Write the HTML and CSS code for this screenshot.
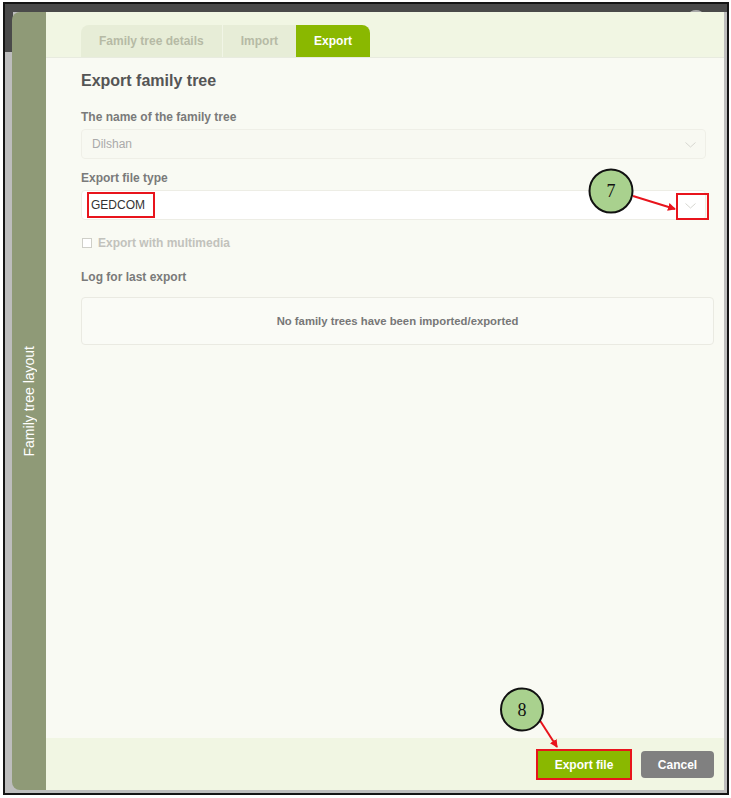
FILE: index.html
```html
<!DOCTYPE html>
<html lang="en">
  <head>
    <meta charset="UTF-8" />
    <title>Export family tree</title>
    <link rel="stylesheet" href="styles.css">
  </head>
  <body>
    <div class="screen">
      <span class="close-hint"></span>
      <div class="panel">
        <div class="sidebar">
          <span class="sidebar-title">Family tree layout</span>
        </div>
        <div class="main">
          <div class="tabs">
            <span class="tab tab-first">Family tree details</span>
            <span class="tab">Import</span>
            <span class="tab tab-active">Export</span>
          </div>
          <div class="content">
            <h2 class="title">Export family tree</h2>

            <label class="field-label">The name of the family tree</label>
            <div class="select select-disabled">
              <span class="select-value">Dilshan</span>
              <svg class="chevron" width="11" height="6" viewBox="0 0 11 6">
                <path d="M0.5 0.5 L5.5 5 L10.5 0.5" fill="none" stroke="#d6d6d0" stroke-width="1" />
              </svg>
            </div>

            <label class="field-label">Export file type</label>
            <div class="select">
              <span class="select-value mark">GEDCOM</span>
              <svg class="chevron" width="11" height="6" viewBox="0 0 11 6">
                <path d="M0.5 0.5 L5.5 5 L10.5 0.5" fill="none" stroke="#d6d6d0" stroke-width="1" />
              </svg>
            </div>

            <div class="check-row">
              <span class="checkbox"></span>
              <span class="check-text">Export with multimedia</span>
            </div>

            <label class="field-label log-label">Log for last export</label>
            <div class="log-box">No family trees have been imported/exported</div>
          </div>
          <div class="footer">
            <button class="btn btn-export">Export file</button>
            <button class="btn btn-cancel">Cancel</button>
          </div>
        </div>
      </div>
    </div>

    <div class="mark-box chevron-mark"></div>

    <svg class="annotations" width="731" height="798" viewBox="0 0 731 798">
      <defs>
        <marker id="arrow" markerWidth="8" markerHeight="8" refX="7" refY="4" orient="auto" markerUnits="userSpaceOnUse">
          <path d="M0 0 L8 4 L0 8 Z" fill="#e8141c" />
        </marker>
      </defs>
      <line x1="633" y1="196" x2="675" y2="209" stroke="#e8141c" stroke-width="2" marker-end="url(#arrow)" />
      <circle cx="611" cy="191" r="21.5" fill="#a9d18e" stroke="#111" stroke-width="2" />
      <text x="611" y="197" class="step">7</text>

      <line x1="539" y1="719" x2="557" y2="747" stroke="#e8141c" stroke-width="2" marker-end="url(#arrow)" />
      <circle cx="522" cy="709.5" r="21" fill="#a9d18e" stroke="#111" stroke-width="2" />
      <text x="522" y="716" class="step">8</text>
    </svg>
  </body>
</html>
```

FILE: styles.css
```css
body {
  margin: 0;
  width: 731px;
  height: 798px;
  background: #fff;
  font-family: "Liberation Sans", Arial, sans-serif;
  position: relative;
  overflow: hidden;
}
.screen {
  position: relative;
  margin: 2px 0 0 3px;
  width: 726px;
  height: 793px;
  box-sizing: border-box;
  border: 2px solid #151515;
  padding: 8px 3px 3px 7px;
  display: flex;
  background:
    linear-gradient(#4a4a4a, #4a4a4a) top left / 100% 8px no-repeat,
    linear-gradient(#4a4a4a, #4a4a4a) top left / 8px 48px no-repeat,
    #bdbdbd;
}
.close-hint {
  position: absolute;
  top: 6px;
  right: 24px;
  width: 14px;
  height: 8px;
  border-radius: 50%;
  background: #a9a9a9;
}
.panel {
  position: relative;
  flex: 1;
  display: flex;
  border-radius: 8px 0 0 8px;
  overflow: hidden;
}
.sidebar {
  width: 34px;
  background-color: #8f9a77;
  display: flex;
  align-items: center;
  justify-content: center;
}
.sidebar-title {
  writing-mode: vertical-rl;
  transform: rotate(180deg);
  color: #fff;
  font-size: 14px;
  white-space: nowrap;
}
.main {
  flex: 1;
  display: flex;
  flex-direction: column;
  background-color: #f9faf3;
}
.tabs {
  height: 46px;
  box-sizing: border-box;
  background-color: #f1f6e3;
  border-bottom: 1px solid #e8ebdf;
  display: flex;
  align-items: flex-end;
  padding-left: 35px;
}
.tab {
  height: 32px;
  line-height: 32px;
  padding: 0 18px;
  font-size: 12px;
  font-weight: bold;
  color: #b6baa5;
  background-color: #e7edd7;
  border-left: 1px solid #f1f5e6;
}
.tab-first {
  border-left: none;
  border-radius: 8px 0 0 0;
}
.tab-active {
  background-color: #8ab800;
  color: #fff;
  border-left: none;
  border-radius: 0 8px 0 0;
}
.content {
  flex: 1;
  padding: 0 10px 0 35px;
}
.title {
  margin: 13px 0 0;
  font-size: 16px;
  line-height: 20px;
  color: #555;
}
.field-label {
  display: block;
  margin-top: 19px;
  font-size: 12px;
  line-height: 14px;
  font-weight: bold;
  color: #7a7a7a;
}
.select {
  margin: 5px 8px 0 0;
  height: 30px;
  box-sizing: border-box;
  border: 1px solid #ededE5;
  border-radius: 4px;
  background-color: #fff;
  display: flex;
  align-items: center;
  justify-content: space-between;
  padding: 0 9px 0 10px;
  font-size: 12px;
  color: #333;
}
.select + .field-label {
  margin-top: 12px;
}
.select-disabled {
  background-color: #f8f9f2;
  color: #aaa;
  border-color: #efefe7;
}
.chevron {
  margin-top: 2px;
}
.mark {
  margin-left: -5px;
  padding: 4px 8px 4px 2px;
  border: 2px solid #e8141c;
}
.check-row {
  display: flex;
  align-items: center;
  margin-top: 16px;
  height: 14px;
}
.checkbox {
  width: 8px;
  height: 8px;
  border: 1px solid #cfcfc8;
  background-color: #fff;
  margin-left: 1px;
  margin-right: 6px;
}
.check-text {
  font-size: 12px;
  font-weight: bold;
  color: #c2c2bc;
}
.log-label {
  margin-top: 20px;
}
.log-box {
  margin-top: 13px;
  height: 48px;
  box-sizing: border-box;
  border: 1px solid #eaeae2;
  border-radius: 4px;
  background-color: #fafbf6;
  display: flex;
  align-items: center;
  justify-content: center;
  font-size: 11.3px;
  font-weight: bold;
  color: #777;
}
.footer {
  height: 52px;
  background-color: #f1f6e3;
  display: flex;
  justify-content: flex-end;
  align-items: flex-start;
  gap: 11px;
  padding: 13px 10px 0 0;
  box-sizing: border-box;
}
.btn {
  height: 27px;
  border: none;
  border-radius: 4px;
  color: #fff;
  font-family: "Liberation Sans", Arial, sans-serif;
  font-size: 12px;
  font-weight: bold;
  padding: 0;
}
.btn-export {
  width: 92px;
  background-color: #8ab800;
  border-radius: 0;
  outline: 2px solid #e8141c;
  outline-offset: 0;
}
.btn-cancel {
  width: 73px;
  background-color: #808080;
}
.mark-box {
  position: absolute;
  border: 2px solid #e8141c;
  box-sizing: border-box;
}
.chevron-mark {
  left: 676px;
  top: 193px;
  width: 33px;
  height: 27px;
}
.annotations {
  position: absolute;
  left: 0;
  top: 0;
  pointer-events: none;
}
.step {
  font-family: "Liberation Serif", "Times New Roman", serif;
  font-size: 18px;
  text-anchor: middle;
  fill: #111;
}
```
